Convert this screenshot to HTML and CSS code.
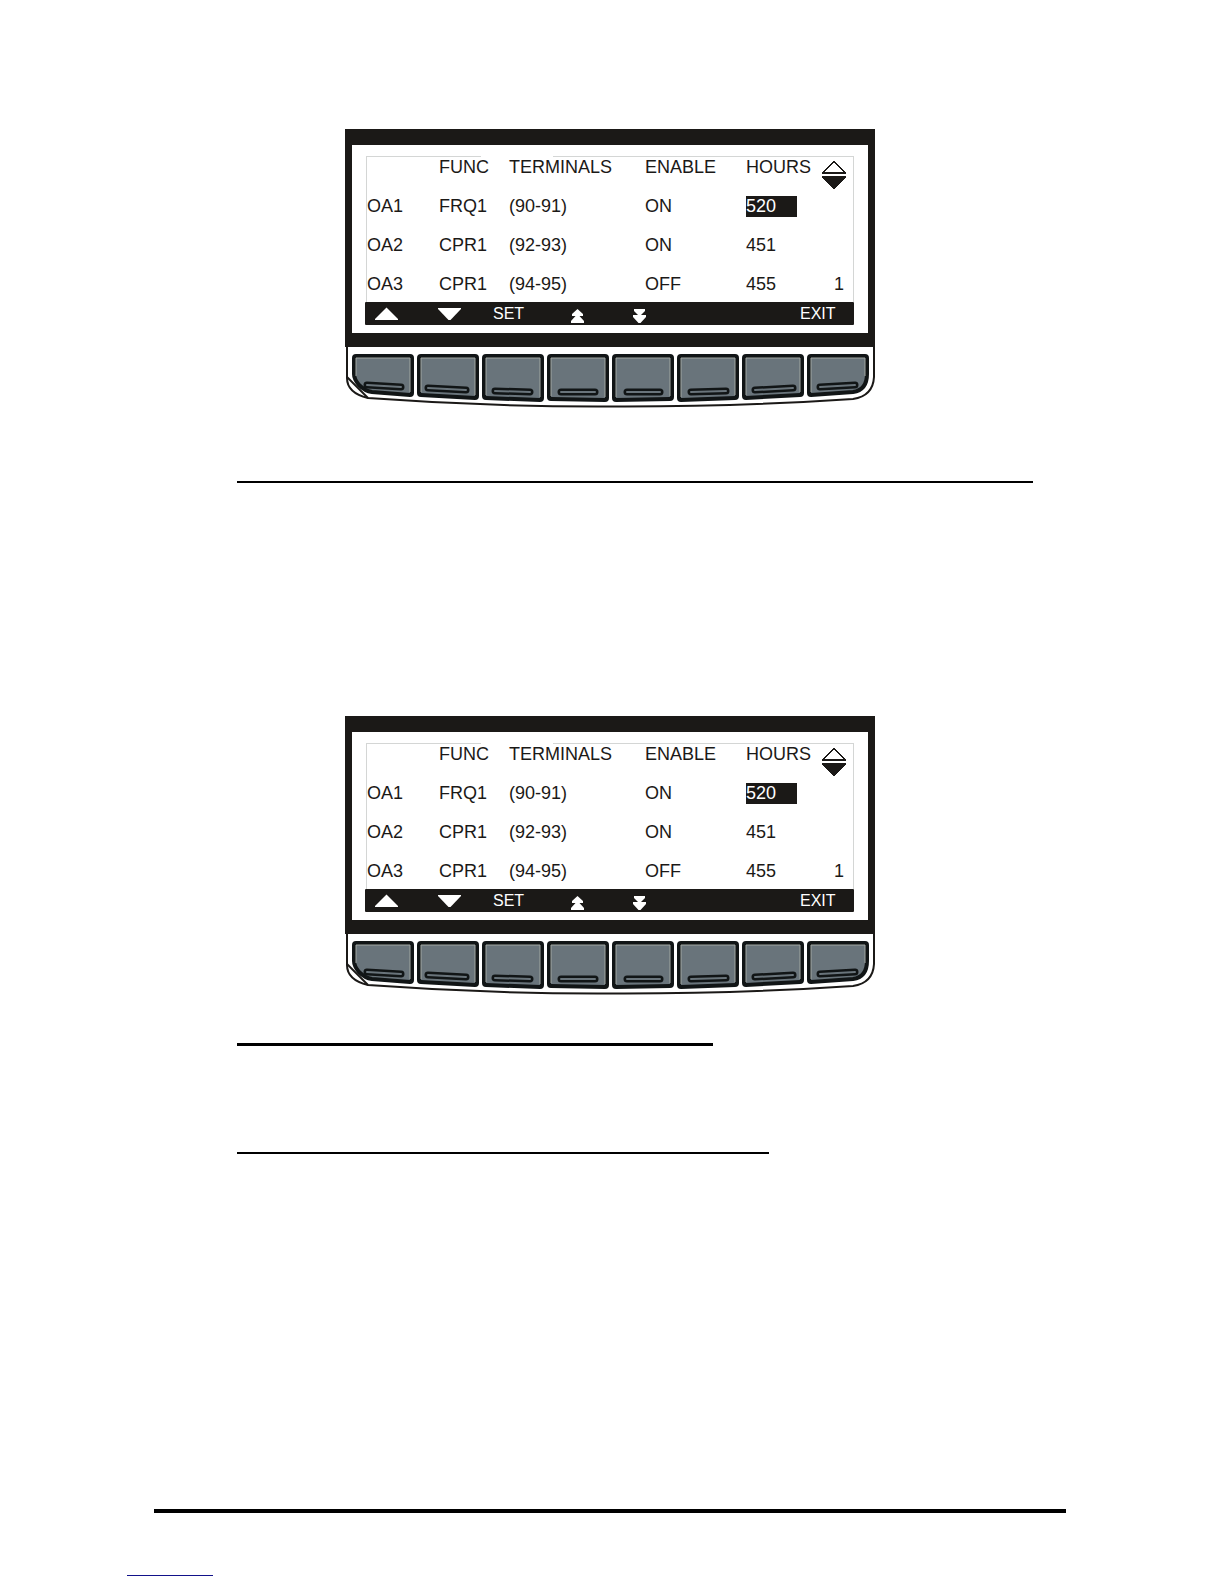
FILE: index.html
```html
<!DOCTYPE html>
<html lang="en">
<head>
<meta charset="utf-8">
<meta name="viewport" content="width=device-width, initial-scale=1">
<title>Analogue outputs</title>
<link rel="stylesheet" href="styles.css">
</head>
<body>
<svg class="defs" aria-hidden="true">
  <symbol id="body" viewBox="0 0 530 61">
    <path d="M2 0V31Q2 46 23 51Q145 60 265 59.500Q390 60 508 52Q528 49 529 30V-60" fill="#fff" stroke="#1b1917" stroke-width="2"/>
    <path d="M2 30L23 51" fill="none" stroke="#1b1917" stroke-width="2"/>
  </symbol>
  <symbol id="key1" viewBox="0 0 62 50">
    <path class="cap" d="M4 2H58Q60 2 60 4V39Q60 41 58 41L20 38Q13 37 7 31Q2 25 2 20V4Q2 2 4 2Z"/>
    <path class="shine" d="M4 22V4H58V38"/>
    <path class="slot" d="M15 31L49 33"/><path class="slot-in" d="M15 31L49 33"/>
  </symbol>
  <symbol id="key2" viewBox="0 0 62 50">
    <path class="cap" d="M4 2H58Q60 2 60 4V42Q60 44 58 44L4 41Q2 41 2 39V4Q2 2 4 2Z"/>
    <path class="shine" d="M4 38V4H58V41"/>
    <path class="slot" d="M11 34L49 36"/><path class="slot-in" d="M11 34L49 36"/>
  </symbol>
  <symbol id="key3" viewBox="0 0 62 50">
    <path class="cap" d="M4 2H58Q60 2 60 4V44Q60 46 58 46L4 44Q2 44 2 42V4Q2 2 4 2Z"/>
    <path class="shine" d="M4 41V4H58V43"/>
    <path class="slot" d="M13 37L48 38"/><path class="slot-in" d="M13 37L48 38"/>
  </symbol>
  <symbol id="key4" viewBox="0 0 62 50">
    <path class="cap" d="M4 2H58Q60 2 60 4V44Q60 46 58 46L4 45Q2 45 2 43V4Q2 2 4 2Z"/>
    <path class="shine" d="M4 42V4H58V43"/>
    <path class="slot" d="M14 38H48"/><path class="slot-in" d="M14 38H48"/>
  </symbol>
  <symbol id="key5" viewBox="0 0 62 50">
    <path class="cap" d="M4 2H58Q60 2 60 4V43Q60 45 58 45L4 46Q2 46 2 44V4Q2 2 4 2Z"/>
    <path class="shine" d="M4 43V4H58V42"/>
    <path class="slot" d="M15 38H48"/><path class="slot-in" d="M15 38H48"/>
  </symbol>
  <symbol id="key6" viewBox="0 0 62 50">
    <path class="cap" d="M4 2H58Q60 2 60 4V42Q60 44 58 44L4 46Q2 46 2 44V4Q2 2 4 2Z"/>
    <path class="shine" d="M4 43V4H58V41"/>
    <path class="slot" d="M14 38L49 37"/><path class="slot-in" d="M14 38L49 37"/>
  </symbol>
  <symbol id="key7" viewBox="0 0 62 50">
    <path class="cap" d="M4 2H58Q60 2 60 4V39Q60 41 58 41L4 44Q2 44 2 42V4Q2 2 4 2Z"/>
    <path class="shine" d="M4 41V4H58V38"/>
    <path class="slot" d="M13 36L51 34"/><path class="slot-in" d="M13 36L51 34"/>
  </symbol>
  <symbol id="key8" viewBox="0 0 62 50">
    <path class="cap" d="M4 2H58Q60 2 60 4V20Q60 36 46 38L4 41Q2 41 2 39V4Q2 2 4 2Z"/>
    <path class="shine" d="M4 38V4H58V22"/>
    <path class="slot" d="M13 33L48 31"/><path class="slot-in" d="M13 33L48 31"/>
  </symbol>
  <symbol id="scroll" viewBox="0 0 24 29">
    <path d="M11 0h2v1h1v1h1v1h1v1h1v1h1v1h1v1h1v1h1v1h1v1h1v1h1v2H0v-2h1v-1h1V9h1V8h1V7h1V6h1V5h1V4h1V3h1V2h1V1h1ZM11 2v1h-1v1H9v1H8v1H7v1H6v1H5v1H4v1H3v1h18v-1h-1V9h-1V8h-1V7h-1V6h-1V5h-1V4h-1V3h-1V2Z" fill="#1b1917" fill-rule="evenodd"/>
    <path d="M0 15H24V17H23V18H22V19H21V20H20V21H19V22H18V23H17V24H16V25H15V26H14V27H13V28H11V27H10V26H9V25H8V24H7V23H6V22H5V21H4V20H3V19H2V18H1V17H0Z" fill="#1b1917"/>
  </symbol>
  <symbol id="up" viewBox="0 0 23 14"><path d="M11.500 0.500L23 12V13H0V12Z" fill="#fff"/></symbol>
  <symbol id="down" viewBox="0 0 23 14"><path d="M0 1H23V2L12.500 13H10.500L0 2Z" fill="#fff"/></symbol>
  <symbol id="fast-up" viewBox="0 0 13 14"><path d="M6.500 0L12 5V7H8.500L13 12V14H0V12L4.500 7H1V5Z" fill="#fff"/></symbol>
  <symbol id="fast-down" viewBox="0 0 13 14"><path d="M1 0H12V2L8 6H13V8L7.500 14H5.500L0 8V6H5L1 2Z" fill="#fff"/></symbol>
</svg>

<main class="page">
  <div class="sheet">
    <section class="device" aria-label="Output settings, first panel">
      <div class="screen">
        <table class="readout">
          <colgroup><col class="c-name"><col class="c-func"><col class="c-term"><col class="c-enable"><col class="c-hours"><col></colgroup>
          <thead><tr><td></td><th>FUNC</th><th>TERMINALS</th><th>ENABLE</th><th>HOURS</th><td><svg class="scroll"><use href="#scroll"/></svg></td></tr></thead>
          <tbody>
            <tr><td>OA1</td><td>FRQ1</td><td>(90-91)</td><td>ON</td><td><span class="selected">520</span></td><td></td></tr>
            <tr><td>OA2</td><td>CPR1</td><td>(92-93)</td><td>ON</td><td>451</td><td></td></tr>
            <tr><td>OA3</td><td>CPR1</td><td>(94-95)</td><td>OFF</td><td>455</td><td class="page-no">1</td></tr>
          </tbody>
        </table>
        <div class="softkeys">
          <svg class="arrow"><use href="#up"/></svg>
          <svg class="arrow"><use href="#down"/></svg>
          <span>SET</span>
          <svg class="fast"><use href="#fast-up"/></svg>
          <svg class="fast"><use href="#fast-down"/></svg>
          <span>EXIT</span>
        </div>
      </div>
      <div class="keypad">
        <svg class="casing" aria-hidden="true"><use href="#body"/></svg>
        <button type="button" aria-label="Up"><svg><use href="#key1"/></svg></button>
        <button type="button" aria-label="Down"><svg><use href="#key2"/></svg></button>
        <button type="button" aria-label="Set"><svg><use href="#key3"/></svg></button>
        <button type="button" aria-label="Page up"><svg><use href="#key4"/></svg></button>
        <button type="button" aria-label="Page down"><svg><use href="#key5"/></svg></button>
        <button type="button" aria-label="Key 6"><svg><use href="#key6"/></svg></button>
        <button type="button" aria-label="Key 7"><svg><use href="#key7"/></svg></button>
        <button type="button" aria-label="Exit"><svg><use href="#key8"/></svg></button>
      </div>
    </section>

    <hr class="rule rule-long">

    <section class="device" aria-label="Output settings, second panel">
      <div class="screen">
        <table class="readout">
          <colgroup><col class="c-name"><col class="c-func"><col class="c-term"><col class="c-enable"><col class="c-hours"><col></colgroup>
          <thead><tr><td></td><th>FUNC</th><th>TERMINALS</th><th>ENABLE</th><th>HOURS</th><td><svg class="scroll"><use href="#scroll"/></svg></td></tr></thead>
          <tbody>
            <tr><td>OA1</td><td>FRQ1</td><td>(90-91)</td><td>ON</td><td><span class="selected">520</span></td><td></td></tr>
            <tr><td>OA2</td><td>CPR1</td><td>(92-93)</td><td>ON</td><td>451</td><td></td></tr>
            <tr><td>OA3</td><td>CPR1</td><td>(94-95)</td><td>OFF</td><td>455</td><td class="page-no">1</td></tr>
          </tbody>
        </table>
        <div class="softkeys">
          <svg class="arrow"><use href="#up"/></svg>
          <svg class="arrow"><use href="#down"/></svg>
          <span>SET</span>
          <svg class="fast"><use href="#fast-up"/></svg>
          <svg class="fast"><use href="#fast-down"/></svg>
          <span>EXIT</span>
        </div>
      </div>
      <div class="keypad">
        <svg class="casing" aria-hidden="true"><use href="#body"/></svg>
        <button type="button" aria-label="Up"><svg><use href="#key1"/></svg></button>
        <button type="button" aria-label="Down"><svg><use href="#key2"/></svg></button>
        <button type="button" aria-label="Set"><svg><use href="#key3"/></svg></button>
        <button type="button" aria-label="Page up"><svg><use href="#key4"/></svg></button>
        <button type="button" aria-label="Page down"><svg><use href="#key5"/></svg></button>
        <button type="button" aria-label="Key 6"><svg><use href="#key6"/></svg></button>
        <button type="button" aria-label="Key 7"><svg><use href="#key7"/></svg></button>
        <button type="button" aria-label="Exit"><svg><use href="#key8"/></svg></button>
      </div>
    </section>

    <hr class="rule rule-bold">
    <hr class="rule rule-mid">
    <hr class="rule rule-footer">
  </div>
  <hr class="rule rule-link">
</main>
</body>
</html>
```
FILE: styles.css
```css
* { box-sizing: border-box; }

body {
  margin: 0;
  background: #fff;
  color: #1b1917;
  font: 18px/21px "Liberation Sans", Arial, sans-serif;
}

.defs { display: none; }

.page { padding: 129px 158px 8px 127px; }
.sheet { padding-left: 27px; }

/* Panel with its display and keypad */
.device { width: 530px; margin: 0 auto; }

.screen {
  padding: 11px 14px 8px 13px;
  border: solid #1b1917;
  border-width: 16px 7px 14px;
  background: #fff;
}

.readout {
  width: 488px;
  margin-left: 1px;
  table-layout: fixed;
  border-spacing: 0;
  border: solid #d4d6d5;
  border-width: 0 1px;
  padding-top: 1px;
  background:
    linear-gradient(#d4d6d5, #d4d6d5) left top / 114px 1px no-repeat,
    linear-gradient(#d4d6d5, #d4d6d5) right top / 300px 1px no-repeat;
}
.c-name { width: 72px; }
.c-func { width: 70px; }
.c-term { width: 136px; }
.c-enable { width: 101px; }
.c-hours { width: 76px; }

.readout tr { height: 39px; }
.readout tbody tr:last-child { height: 28px; }
.readout th, .readout td {
  padding: 0;
  font-weight: 400;
  text-align: left;
  vertical-align: top;
}
.readout .page-no { padding-left: 12px; }
.selected {
  display: block;
  width: 51px;
  background: #1b1917;
  color: #fff;
}
.scroll { display: block; width: 24px; height: 29px; margin-top: 4px; }

.softkeys {
  display: grid;
  grid-template-columns: 63px 55px 78px 62px 167px auto;
  align-items: center;
  height: 23px;
  padding-left: 10px;
  border-radius: 1px;
  background: #1b1917;
  color: #fff;
  font-size: 16px;
}
.arrow { width: 23px; height: 14px; }
.fast { width: 13px; height: 14px; margin-top: 4px; }

.keypad {
  position: relative;
  display: grid;
  grid-template-columns: repeat(8, 62px);
  gap: 3px;
  height: 61px;
  padding: 7px 6px 0 7px;
}
.casing { position: absolute; inset: 0; width: 100%; height: 100%; }
.keypad button {
  position: relative;
  height: 50px;
  padding: 0;
  border: 0;
  background: none;
}
.keypad button svg { display: block; width: 62px; height: 50px; }
.cap { fill: #69747b; stroke: #111516; stroke-width: 4; }
.shine { fill: none; stroke: #a3a8a3; stroke-width: 1; }
.slot, .slot-in { fill: none; stroke-linecap: round; }
.slot { stroke: #111516; stroke-width: 7; }
.slot-in { stroke: #69747b; stroke-width: 2; }

/* Section rules */
.rule { margin: 0; border: 0; height: 2px; background: #000; }
.rule-long { max-width: 796px; margin: 73px 0 233px 83px; }
.rule-bold { max-width: 476px; height: 3px; margin: 48px 0 0 83px; }
.rule-mid { max-width: 532px; margin: 106px 0 0 83px; }
.rule-footer { height: 4px; margin-top: 355px; }
.rule-link { width: 86px; height: 1px; margin-top: 62px; background: #12128a; }
```
